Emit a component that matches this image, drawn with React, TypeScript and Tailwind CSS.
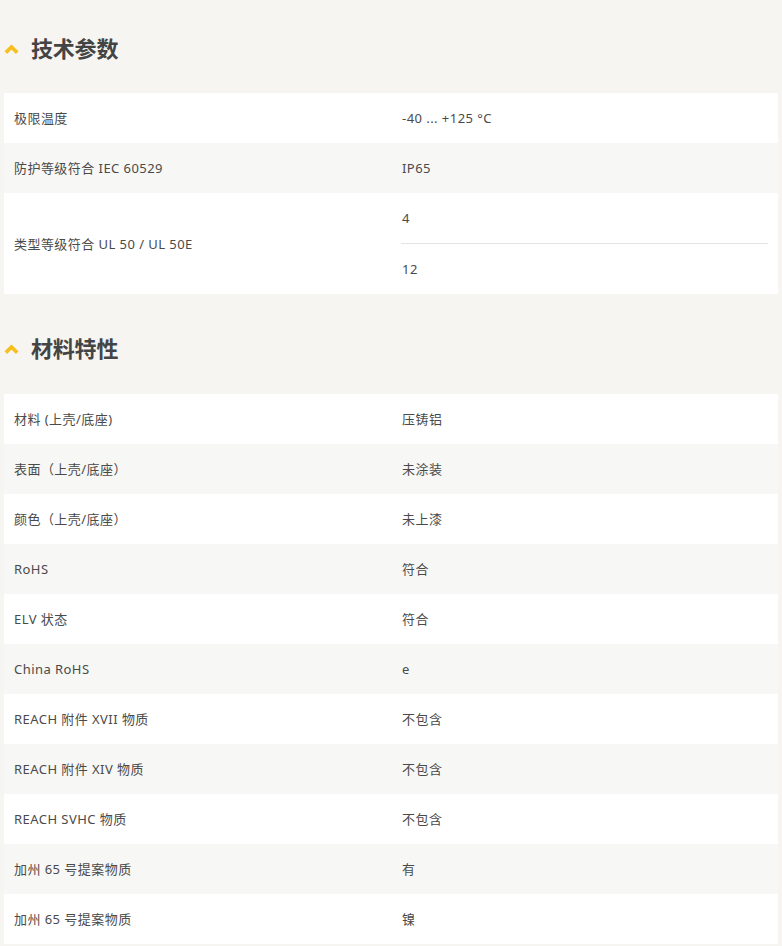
import React from "react";

type Row = { label: string; values: string[] };

const techRows: Row[] = [
  { label: "极限温度", values: ["-40 ... +125 °C"] },
  { label: "防护等级符合 IEC 60529", values: ["IP65"] },
  { label: "类型等级符合 UL 50 / UL 50E", values: ["4", "12"] },
];

const materialRows: Row[] = [
  { label: "材料 (上壳/底座)", values: ["压铸铝"] },
  { label: "表面（上壳/底座）", values: ["未涂装"] },
  { label: "颜色（上壳/底座）", values: ["未上漆"] },
  { label: "RoHS", values: ["符合"] },
  { label: "ELV 状态", values: ["符合"] },
  { label: "China RoHS", values: ["e"] },
  { label: "REACH 附件 XVII 物质", values: ["不包含"] },
  { label: "REACH 附件 XIV 物质", values: ["不包含"] },
  { label: "REACH SVHC 物质", values: ["不包含"] },
  { label: "加州 65 号提案物质", values: ["有"] },
  { label: "加州 65 号提案物质", values: ["镍"] },
];

function SectionTitle({ title, className }: { title: string; className: string }) {
  return (
    <div className={`flex items-center h-[30px] ${className}`}>
      <svg width="15" height="10" viewBox="0 0 15 10" className="ml-[4px] mr-[12px] mt-[1px]">
        <path d="M1.8 8.6 L7.5 3 L13.2 8.6" fill="none" stroke="#f7bf1e" strokeWidth="3.6" />
      </svg>
      <h2 className="text-[22px] font-bold text-[#444444] leading-[30px] tracking-[-0.2px]">{title}</h2>
    </div>
  );
}

function SpecTable({ rows }: { rows: Row[] }) {
  return (
    <div className="mx-[4px]">
      {rows.map((row, i) => (
        <div
          key={i}
          className={`grid grid-cols-2 ${i % 2 === 0 ? "bg-white" : "bg-[#f7f7f5]"}`}
        >
          <div className="flex items-center px-[10px] pt-[2px]">{row.label}</div>
          <div className="pl-[10px] pr-[10px]">
            {row.values.map((v, j) => (
              <div
                key={j}
                className={`flex items-center pl-[1px] pt-[2px] ${j > 0 ? "border-t border-[#e4e4e4] h-[51px]" : "h-[50px]"}`}
              >
                {v}
              </div>
            ))}
          </div>
        </div>
      ))}
    </div>
  );
}

export default function App() {
  return (
    <div
      className="min-h-[946px] bg-[#f6f5f1] text-[13px] text-[#4a4a4a] tracking-[0.45px]"
      style={{ fontFamily: '"Noto Sans", "Noto Sans CJK SC", sans-serif' }}
    >
      <SectionTitle title="技术参数" className="pt-[33px] box-content mb-[30px]" />
      <SpecTable rows={techRows} />
      <SectionTitle title="材料特性" className="pt-[39px] box-content mb-[31px]" />
      <SpecTable rows={materialRows} />
    </div>
  );
}
